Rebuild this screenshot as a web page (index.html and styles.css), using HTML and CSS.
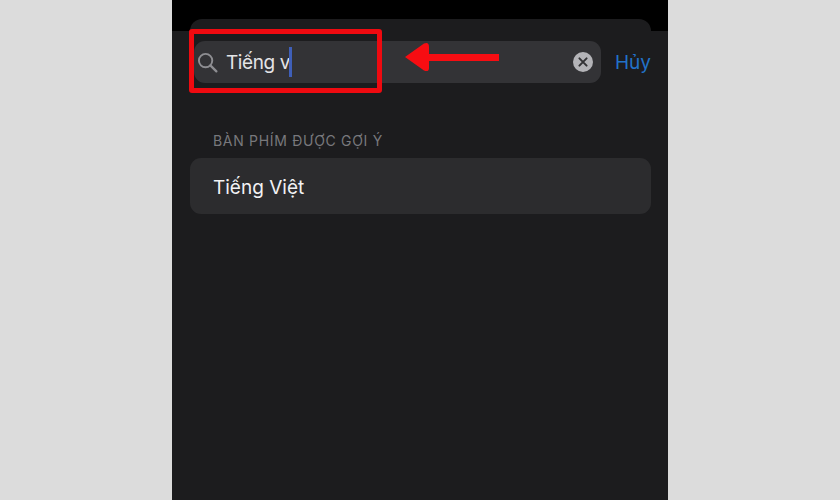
FILE: index.html
```html
<!DOCTYPE html>
<html lang="vi">
<head>
<meta charset="utf-8">
<title>Bàn phím</title>
<link rel="stylesheet" href="styles.css">
</head>
<body>
<main class="phone">
  <div class="peek"></div>
  <section class="sheet">
    <div class="search-row">
      <div class="field">
        <svg class="icon-search" viewBox="0 0 22 22" width="21" height="21" aria-hidden="true"><circle cx="9" cy="9" r="7" fill="none" stroke="#8e8e92" stroke-width="2"/><path d="M14 14l6.3 6.3" stroke="#8e8e92" stroke-width="2.4" stroke-linecap="round"/></svg>
        <span class="query">Tiếng v</span><span class="caret"></span>
        <svg class="icon-clear" viewBox="0 0 20 20" width="20" height="20" aria-hidden="true"><circle cx="10" cy="10" r="10" fill="#b4b4b8"/><path d="M6.4 6.4l7.2 7.2M13.6 6.4l-7.2 7.2" stroke="#333336" stroke-width="2" stroke-linecap="round"/></svg>
      </div>
      <span class="cancel">Hủy</span>
    </div>
    <h2 class="section-label">BÀN PHÍM ĐƯỢC GỢI Ý</h2>
    <div class="result">Tiếng Việt</div>
  </section>
  <div class="mark-box"></div>
  <svg class="mark-arrow" viewBox="0 0 96 32" width="96" height="32" aria-hidden="true"><path d="M1 16L20 2.5Q25 0.5 25 6V13H95V20H25V27Q25 31.5 20 29.5Z" fill="#f70d12"/></svg>
</main>
</body>
</html>
```
FILE: styles.css
```css
* { box-sizing: border-box; }
html, body { margin: 0; height: 100%; }
body {
  background: #dcdcdc;
  display: flex;
  justify-content: center;
  overflow: hidden;
  font-family: Inter, "Liberation Sans", sans-serif;
}
.phone {
  position: relative;
  width: 496px;
  height: 500px;
  background: #000;
  display: flex;
  flex-direction: column;
  padding-top: 19px;
}
.peek {
  height: 12px;
  margin: 0 17px 0 18px;
  background: #1c1c1e;
  border-radius: 12px 12px 0 0;
}
.sheet {
  flex: 1;
  background: #1c1c1e;
  padding: 10px 17px 0 22px;
}
.search-row {
  display: flex;
  align-items: center;
  height: 42px;
}
.field {
  width: 407px;
  height: 42px;
  background: #333336;
  border-radius: 11px;
  display: flex;
  align-items: center;
  padding: 0 8px 0 4px;
  color: #e4e4e6;
}
.icon-search { flex: none; margin-left: -1px; }
.query {
  margin-left: 8px;
  font-size: 19px;
  line-height: 24px;
  letter-spacing: -0.4px;
  padding-top: 1px;
}
.caret {
  width: 3px;
  height: 30px;
  background: #3f5fb8;
  margin-left: -1px;
}
.icon-clear { margin-left: auto; }
.cancel {
  margin-left: 14px;
  color: #2272c8;
  font-size: 19px;
}
.section-label {
  margin: 48px 0 0 19px;
  height: 20px;
  font-size: 14px;
  line-height: 20px;
  font-weight: 400;
  color: #78787c;
  letter-spacing: 0.7px;
}
.result {
  margin: 7px 0 0 -4px;
  height: 56px;
  padding-left: 23px;
  background: #2c2c2e;
  border-radius: 11px;
  font-size: 19px;
  line-height: 60px;
  color: #f2f2f4;
}
.mark-box {
  position: absolute;
  left: 17px;
  top: 29px;
  width: 193px;
  height: 64px;
  border: 5px solid #ef0a10;
  border-radius: 3px;
}
.mark-arrow {
  position: absolute;
  left: 232px;
  top: 41px;
}
```
